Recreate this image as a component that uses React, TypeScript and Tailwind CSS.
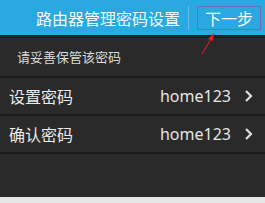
export default function App() {
  const cjk = { fontFamily: '"Noto Sans CJK SC", "Noto Sans", sans-serif' };
  const rows = [
    { label: "设置密码", value: "home123" },
    { label: "确认密码", value: "home123" },
  ];
  return (
    <div className="relative w-[265px] h-[203px] bg-[#2a2a2a] flex flex-col overflow-hidden" style={cjk}>
      {/* 顶部栏 */}
      <div className="h-[35px] bg-[#2aa8e2] flex items-center">
        <span className="pl-[36px] text-[16px] leading-none text-[#f3fafd]">路由器管理密码设置</span>
        <div className="ml-[8px] w-px h-[24px] bg-[#5cc0ec]" />
        <div className="ml-[8px] w-[64px] h-[24px] border border-[#6c70b0] flex items-center justify-center text-[16px] leading-none text-[#f6fbfe]">
          下一步
        </div>
      </div>
      <div className="h-[3px] bg-[#17232b]" />

      <div className="h-[38px] flex items-center pl-[17px] text-[13px] text-[#dcdcdc]">请妥善保管该密码</div>

      <div className="border-t-2 border-[#1b1b1b]">
        {rows.map((r) => (
          <div
            key={r.label}
            className="h-[38px] flex items-center pl-[9px] pr-[12px] border-b-2 border-[#1b1b1b]"
          >
            <span className="flex-1 text-[16px] text-[#ececec]">{r.label}</span>
            <span className="text-[16px] text-[#e4e4e4]" style={{ fontFamily: '"Noto Sans", sans-serif' }}>
              {r.value}
            </span>
            <svg width="9" height="14" viewBox="0 0 9 14" className="ml-[13px]">
              <path d="M2 2 L7 7 L2 12" fill="none" stroke="#dedede" strokeWidth="2.2" />
            </svg>
          </div>
        ))}
      </div>

      <div className="flex-1" />
      <div className="h-[6px] bg-[#e6e6e6]" />

      {/* 红色箭头 */}
      <svg className="absolute left-0 top-0" width="265" height="203">
        <line x1="202" y1="54" x2="211" y2="39" stroke="#c81e1e" strokeWidth="1.2" />
        <polygon points="214,33 208,39 213,41" fill="#e0201c" />
      </svg>
    </div>
  );
}
